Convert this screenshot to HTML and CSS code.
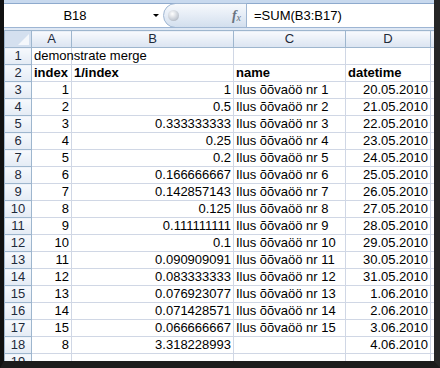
FILE: index.html
```html
<!DOCTYPE html>
<html lang="et">
<head>
    <meta charset="UTF-8">
    <title>Sheet1</title>
    <link rel="stylesheet" href="styles.css">
</head>
<body>
    <div class="shot">
        <div class="ribbon-edge"></div>

        <div class="formula-bar">
            <div class="name-box">
                <span class="name-ref">B18</span>
                <span class="name-drop"></span>
            </div>
            <div class="fx-pill">
                <span class="pill-knob"></span>
                <span class="fx"><i>f</i><sub>x</sub></span>
            </div>
            <div class="formula-input">=SUM(B3:B17)</div>
        </div>

        <table class="sheet">
            <colgroup>
                <col class="c-head">
                <col class="c-a">
                <col class="c-b">
                <col class="c-c">
                <col class="c-d">
                <col class="c-e">
            </colgroup>
            <tr class="col-heads">
                <th class="corner"><svg width="11" height="11" viewBox="0 0 11 11"><polygon points="11,0 11,11 0,11" fill="#f4f7fb"/></svg></th>
                <th>A</th><th>B</th><th>C</th><th>D</th><th></th>
            </tr>
            <tr><th>1</th><td class="txt">demonstrate merge</td><td></td><td></td><td></td><td></td></tr>
            <tr><th>2</th><td class="txt bold">index</td><td class="txt bold">1/index</td><td class="txt bold">name</td><td class="txt bold">datetime</td><td></td></tr>
            <tr><th>3</th><td>1</td><td>1</td><td class="txt">Ilus õõvaöö nr 1</td><td>20.05.2010</td><td></td></tr>
            <tr><th>4</th><td>2</td><td>0.5</td><td class="txt">Ilus õõvaöö nr 2</td><td>21.05.2010</td><td></td></tr>
            <tr><th>5</th><td>3</td><td>0.333333333</td><td class="txt">Ilus õõvaöö nr 3</td><td>22.05.2010</td><td></td></tr>
            <tr><th>6</th><td>4</td><td>0.25</td><td class="txt">Ilus õõvaöö nr 4</td><td>23.05.2010</td><td></td></tr>
            <tr><th>7</th><td>5</td><td>0.2</td><td class="txt">Ilus õõvaöö nr 5</td><td>24.05.2010</td><td></td></tr>
            <tr><th>8</th><td>6</td><td>0.166666667</td><td class="txt">Ilus õõvaöö nr 6</td><td>25.05.2010</td><td></td></tr>
            <tr><th>9</th><td>7</td><td>0.142857143</td><td class="txt">Ilus õõvaöö nr 7</td><td>26.05.2010</td><td></td></tr>
            <tr><th>10</th><td>8</td><td>0.125</td><td class="txt">Ilus õõvaöö nr 8</td><td>27.05.2010</td><td></td></tr>
            <tr><th>11</th><td>9</td><td>0.111111111</td><td class="txt">Ilus õõvaöö nr 9</td><td>28.05.2010</td><td></td></tr>
            <tr><th>12</th><td>10</td><td>0.1</td><td class="txt">Ilus õõvaöö nr 10</td><td>29.05.2010</td><td></td></tr>
            <tr><th>13</th><td>11</td><td>0.090909091</td><td class="txt">Ilus õõvaöö nr 11</td><td>30.05.2010</td><td></td></tr>
            <tr><th>14</th><td>12</td><td>0.083333333</td><td class="txt">Ilus õõvaöö nr 12</td><td>31.05.2010</td><td></td></tr>
            <tr><th>15</th><td>13</td><td>0.076923077</td><td class="txt">Ilus õõvaöö nr 13</td><td>1.06.2010</td><td></td></tr>
            <tr><th>16</th><td>14</td><td>0.071428571</td><td class="txt">Ilus õõvaöö nr 14</td><td>2.06.2010</td><td></td></tr>
            <tr><th>17</th><td>15</td><td>0.066666667</td><td class="txt">Ilus õõvaöö nr 15</td><td>3.06.2010</td><td></td></tr>
            <tr><th>18</th><td>8</td><td>3.318228993</td><td></td><td>4.06.2010</td><td></td></tr>
            <tr><th>19</th><td></td><td></td><td></td><td></td><td></td></tr>
        </table>
    </div>
</body>
</html>
```

FILE: styles.css
```css
body {
    margin: 0;
    background: #fff;
}

.shot {
    width: 440px;
    height: 368px;
    box-sizing: border-box;
    overflow: hidden;
    background: #dfe8f4;
    border-left: 4px solid #111;
    border-right: 6px solid #262626;
    border-bottom: 7px solid #1c1c1c;
    font-family: "Liberation Sans", Arial, sans-serif;
    font-size: 13px;
    color: #000;
}

/* bottom of the ribbon, just peeking in */
.ribbon-edge {
    height: 3px;
    background: #c8d9ee;
    border-bottom: 1px solid #8eaacd;
}

/* name box + fx + formula */
.formula-bar {
    display: flex;
    height: 23px;
    background: #fff;
    border-bottom: 1px solid #9db5d3;
}

.name-box {
    display: flex;
    align-items: center;
    width: 158px;
    padding-left: 1px;
}

.name-ref {
    width: 140px;
    text-align: center;
    line-height: 23px;
}

.name-drop {
    width: 0;
    height: 0;
    margin-left: 8px;
    border-left: 3px solid transparent;
    border-right: 3px solid transparent;
    border-top: 3px solid #000;
}

.fx-pill {
    display: flex;
    align-items: center;
    justify-content: space-between;
    width: 84px;
    height: 25px;
    margin-top: -1px;
    box-sizing: border-box;
    padding: 0 5px 0 4px;
    border: 1px solid #9fb6d2;
    border-radius: 13px 0 0 13px;
    background: linear-gradient(#f7f9fc, #e3ebf5 55%, #d3dfee);
}

.pill-knob {
    width: 11px;
    height: 11px;
    border-radius: 50%;
    background: radial-gradient(circle at 40% 35%, #ffffff, #c6ccd5 60%, #9aa3ae);
}

.fx {
    font-family: "Liberation Serif", "Times New Roman", serif;
    font-size: 14px;
    color: #6a7480;
    line-height: 1;
}

.fx i {
    font-weight: bold;
}

.fx sub {
    font-size: 10px;
    font-style: italic;
    vertical-align: -1px;
}

.formula-input {
    flex: 1;
    padding-left: 7px;
    line-height: 23px;
    white-space: nowrap;
}

/* grid */
.sheet {
    width: 430px;
    margin-top: 2px;
    border-collapse: collapse;
    table-layout: fixed;
    background: #fff;
}

.c-head { width: 27px; }
.c-a { width: 40px; }
.c-b { width: 162px; }
.c-c { width: 112px; }
.c-d { width: 85px; }
.c-e { width: 4px; }

.sheet tr {
    height: 17px;
}

.sheet th,
.sheet td {
    box-sizing: border-box;
    height: 17px;
    padding: 0 2px;
    line-height: 16px;
    white-space: nowrap;
    overflow: visible;
}

.sheet th {
    font-weight: normal;
    color: #1e2a3a;
    text-align: center;
    background: linear-gradient(#f6f9fd, #e4ebf5);
    border: 1px solid #9eb6ce;
}

.col-heads th {
    background: linear-gradient(#f8fafd, #e9eff7 50%, #dbe4f1);
}

.sheet th.corner {
    padding: 0;
    text-align: right;
    vertical-align: bottom;
    background: #d4e0ef;
}

.corner svg {
    display: block;
    margin: 0 2px 2px auto;
}

.sheet td {
    text-align: right;
    border: 1px solid #d0d7e5;
}

.sheet td.txt {
    text-align: left;
}

.bold {
    font-weight: bold;
}
```
